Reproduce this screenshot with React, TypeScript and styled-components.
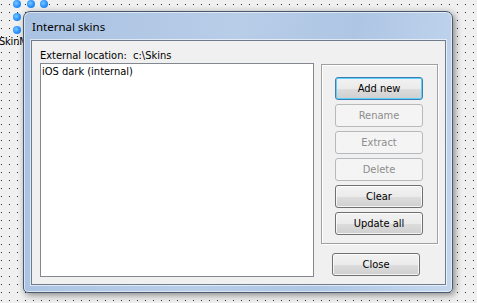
import React from 'react';
import styled, { createGlobalStyle } from 'styled-components';

const GlobalStyle = createGlobalStyle`
  html, body {
    margin: 0;
    padding: 0;
  }
  body {
    width: 477px;
    height: 303px;
    overflow: hidden;
    background-color: #2a2a2a;
    background-image:
      linear-gradient(to right, transparent 1px, #f0f0f0 1px),
      linear-gradient(to bottom, transparent 1px, #f0f0f0 1px);
    background-size: 8px 8px;
    background-position: 1px 4px;
  }
`;

const uiFont = `"DejaVu Sans Condensed", "Liberation Sans", sans-serif`;

const Canvas = styled.div`
  position: relative;
  width: 477px;
  height: 303px;
`;

const Handle = styled.div<{ $x: number; $y: number }>`
  position: absolute;
  left: ${(p) => p.$x - 4}px;
  top: ${(p) => p.$y - 4}px;
  width: 8px;
  height: 8px;
  border-radius: 50%;
  background: radial-gradient(circle at 40% 40%, #7cc8ff 0%, #2b95ff 50%, #1475e0 100%);
`;

const ComponentLabel = styled.div`
  position: absolute;
  left: -1px;
  top: 35px;
  font-family: ${uiFont};
  font-size: 11px;
  letter-spacing: -0.2px;
  color: #000;
  white-space: nowrap;
`;

const Window = styled.div`
  position: absolute;
  left: 23px;
  top: 11px;
  width: 430px;
  height: 282px;
  box-sizing: border-box;
  border: 1px solid #4a5a6e;
  border-radius: 7px 7px 5px 5px;
  background: linear-gradient(100deg, #a9c2e2 0%, #b8cde8 45%, #aec6e4 70%, #c4d7ef 100%);
  box-shadow: inset 0 0 0 1px rgba(255, 255, 255, 0.55), 2px 2px 7px rgba(0, 0, 0, 0.45);
  display: flex;
  flex-direction: column;
  padding: 0 6px 7px 7px;
`;

const TitleBar = styled.div`
  height: 28px;
  display: flex;
  align-items: center;
  padding: 0 0 0 1px;
  font-family: "Noto Sans", sans-serif;
  font-size: 11.5px;
  color: #000;
`;

const Client = styled.div`
  flex: 1;
  box-sizing: border-box;
  background: #f0f0f0;
  border: 1px solid #6f7c8c;
  box-shadow: 0 0 0 1px rgba(255, 255, 255, 0.6);
  display: grid;
  grid-template-columns: 274px 117px;
  align-items: start;
  column-gap: 7px;
  padding: 8px 0 0 8px;
  font-family: ${uiFont};
  font-size: 11px;
  color: #000;
`;

const LeftColumn = styled.div`
  display: flex;
  flex-direction: column;
`;

const LocationLabel = styled.div`
  height: 14px;
  line-height: 14px;
  white-space: pre;
`;

const ListBox = styled.div`
  height: 214px;
  box-sizing: border-box;
  background: #fff;
  border: 1px solid #828790;
  padding: 1px 1px;
`;

const ListItem = styled.div`
  height: 14px;
  line-height: 14px;
`;

const RightColumn = styled.div`
  display: flex;
  flex-direction: column;
  padding-top: 15px;
`;

const GroupBox = styled.div`
  height: 180px;
  box-sizing: border-box;
  border: 1px solid #a0a0a0;
  box-shadow: 1px 1px 0 #fff, inset 1px 1px 0 #fff;
  display: flex;
  flex-direction: column;
  gap: 4px;
  padding: 12px 0 0 13px;
`;

const Button = styled.div<{ $default?: boolean; $disabled?: boolean }>`
  width: 88px;
  height: 23px;
  box-sizing: border-box;
  border-radius: 3px;
  display: flex;
  align-items: center;
  justify-content: center;
  font-family: ${uiFont};
  font-size: 11px;
  color: ${(p) => (p.$disabled ? '#8d8d8d' : '#000')};
  border: 1px solid ${(p) => (p.$disabled ? '#b6babd' : p.$default ? '#3c7fb1' : '#707070')};
  background: ${(p) =>
    p.$disabled
      ? '#f4f4f4'
      : 'linear-gradient(#f2f2f2 0%, #ebebeb 50%, #dddddd 51%, #cfcfcf 100%)'};
  box-shadow: ${(p) =>
    p.$disabled
      ? 'none'
      : p.$default
      ? 'inset 0 0 0 1px #5fd0fa'
      : 'inset 0 0 0 1px rgba(255, 255, 255, 0.75)'};
`;

const CloseRow = styled.div`
  margin-top: 9px;
  padding-left: 11px;
`;

export default function App() {
  return (
    <>
      <GlobalStyle />
      <Canvas>
        <Handle $x={17} $y={4} />
        <Handle $x={31} $y={4} />
        <Handle $x={44} $y={4} />
        <Handle $x={17} $y={17} />
        <Handle $x={17} $y={30} />
        <ComponentLabel>SkinManager</ComponentLabel>
        <Window>
          <TitleBar>Internal skins</TitleBar>
          <Client>
            <LeftColumn>
              <LocationLabel>External location:  c:\Skins</LocationLabel>
              <ListBox>
                <ListItem>iOS dark (internal)</ListItem>
              </ListBox>
            </LeftColumn>
            <RightColumn>
              <GroupBox>
                <Button $default>Add new</Button>
                <Button $disabled>Rename</Button>
                <Button $disabled>Extract</Button>
                <Button $disabled>Delete</Button>
                <Button>Clear</Button>
                <Button>Update all</Button>
              </GroupBox>
              <CloseRow>
                <Button>Close</Button>
              </CloseRow>
            </RightColumn>
          </Client>
        </Window>
      </Canvas>
    </>
  );
}
